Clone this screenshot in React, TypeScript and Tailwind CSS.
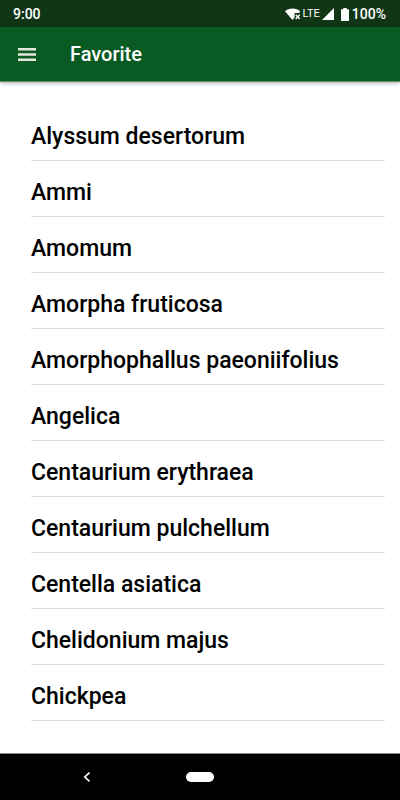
import React, { useState } from 'react';

const FAVORITES = [
  'Alyssum desertorum',
  'Ammi',
  'Amomum',
  'Amorpha fruticosa',
  'Amorphophallus paeoniifolius',
  'Angelica',
  'Centaurium erythraea',
  'Centaurium pulchellum',
  'Centella asiatica',
  'Chelidonium majus',
  'Chickpea',
];

const toSlug = (name: string) => name.toLowerCase().replace(/\s+/g, '-');

const StatusBar: React.FC = () => (
  <div className="flex h-[27px] items-center justify-between bg-[#103616] pt-px pr-[14px] pl-[13px] text-sm leading-5 font-medium text-white">
    <span>9:00</span>
    <div className="flex items-center">
      <svg width="16" height="12" viewBox="0 0 16 12" fill="currentColor" aria-label="Wi-Fi">
        <path d="M7.5 0.5C4.6 0.5 2 1.5 0 3.2L7.5 12L9.6 9.5V4.9H14L15.2 3.3C13.1 1.5 10.5 0.5 7.5 0.5Z" />
        <path d="M10.7 6.7L14.7 10.9M14.7 6.7L10.7 10.9" fill="none" stroke="currentColor" strokeWidth="1.4" />
      </svg>
      <span className="ml-[2px] text-[11px] leading-5 font-normal">LTE</span>
      <svg className="ml-[2px]" width="12" height="12" viewBox="0 0 12 12" fill="currentColor" aria-label="Signal">
        <path d="M12 0V12H0Z" />
      </svg>
      <svg className="ml-[7px]" width="8" height="13" viewBox="0 0 8 13" fill="currentColor" aria-label="Battery">
        <path d="M2.3 0H5.7V1.3H7.2Q8 1.3 8 2.1V12.2Q8 13 7.2 13H0.8Q0 13 0 12.2V2.1Q0 1.3 0.8 1.3H2.3Z" />
      </svg>
      <span className="ml-[3px]">100%</span>
    </div>
  </div>
);

const AppBar: React.FC<{ open: boolean; onMenu: () => void }> = ({ open, onMenu }) => (
  <header className="relative flex h-[55px] items-center border-b border-[#5f8f62] bg-[#0a5a24] pl-[18px] text-white shadow-[0_1px_4px_rgba(0,0,0,0.35)]">
    <button type="button" aria-label="Menu" aria-expanded={open} onClick={onMenu}>
      <svg width="18" height="13" viewBox="0 0 18 13" fill="#e6e8dc">
        <path d="M0 0H18V2.6H0ZM0 5.2H18V7.8H0ZM0 10.4H18V13H0Z" />
      </svg>
    </button>
    <h1 className="ml-[34px] text-xl leading-6 font-medium">Favorite</h1>
  </header>
);

const NavigationBar: React.FC = () => (
  <nav className="grid h-[47px] grid-cols-[1fr_28px_1fr] items-center border-t border-[#888888] bg-black text-white">
    <button type="button" aria-label="Back" className="mr-[13px] flex justify-center">
      <svg width="8" height="10" viewBox="0 0 8 10" fill="none" stroke="currentColor" strokeWidth="1.6">
        <path d="M6.5 0.7L1.8 5L6.5 9.3" />
      </svg>
    </button>
    <button type="button" aria-label="Home" className="h-[10px] rounded-full bg-white" />
  </nav>
);

export default function App() {
  const [menuOpen, setMenuOpen] = useState(false);

  return (
    <div className="flex min-h-screen flex-col bg-white font-['Roboto',sans-serif]">
      <StatusBar />
      <AppBar open={menuOpen} onMenu={() => setMenuOpen(!menuOpen)} />
      <main className="flex-1 pt-[23px] pr-[15px] pb-8 pl-[31px]">
        <ul>
          {FAVORITES.map(name => (
            <li key={name} className="border-b border-[#dcdcdc]">
              <a href={`#${toSlug(name)}`} className="flex h-[55px] items-center pt-2 text-[23px] leading-7 font-medium text-black">
                {name}
              </a>
            </li>
          ))}
        </ul>
      </main>
      <NavigationBar />
    </div>
  );
}
